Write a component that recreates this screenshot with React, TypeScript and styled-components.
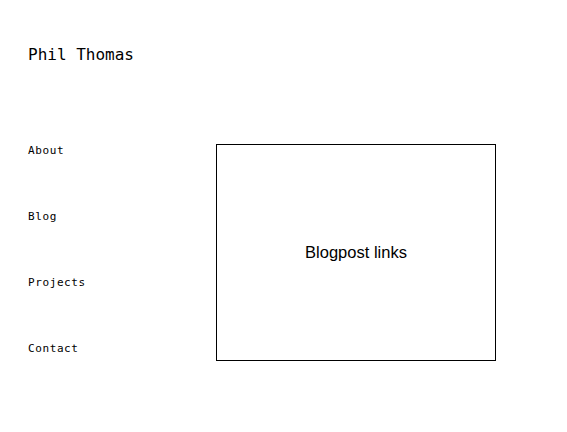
import styled, { createGlobalStyle } from "styled-components";

const GlobalStyle = createGlobalStyle`
  html, body {
    margin: 0;
    padding: 0;
    background: #fff;
    color: #000;
  }
`;

const Page = styled.div`
  padding: 45px 28px 0 28px;
  font-family: "DejaVu Sans Mono", monospace;
`;

const Title = styled.h1`
  margin: 0;
  font-size: 16px;
  font-weight: normal;
  line-height: 20px;
`;

const Main = styled.div`
  display: grid;
  grid-template-columns: 188px 280px;
  margin-top: 79px;
`;

const Nav = styled.nav`
  display: flex;
  flex-direction: column;
  gap: 52px;
`;

const NavLink = styled.a`
  font-size: 11px;
  line-height: 14px;
  letter-spacing: 0.6px;
  color: #000;
  text-decoration: none;
`;

const Box = styled.div`
  height: 215px;
  border: 1px solid #000;
  display: flex;
  align-items: center;
  justify-content: center;
  font-family: "Liberation Sans", Arial, sans-serif;
  font-size: 16.5px;
`;

export default function App() {
  return (
    <>
      <GlobalStyle />
      <Page>
        <Title>Phil Thomas</Title>
        <Main>
          <Nav>
            <NavLink href="#">About</NavLink>
            <NavLink href="#">Blog</NavLink>
            <NavLink href="#">Projects</NavLink>
            <NavLink href="#">Contact</NavLink>
          </Nav>
          <Box>Blogpost links</Box>
        </Main>
      </Page>
    </>
  );
}
